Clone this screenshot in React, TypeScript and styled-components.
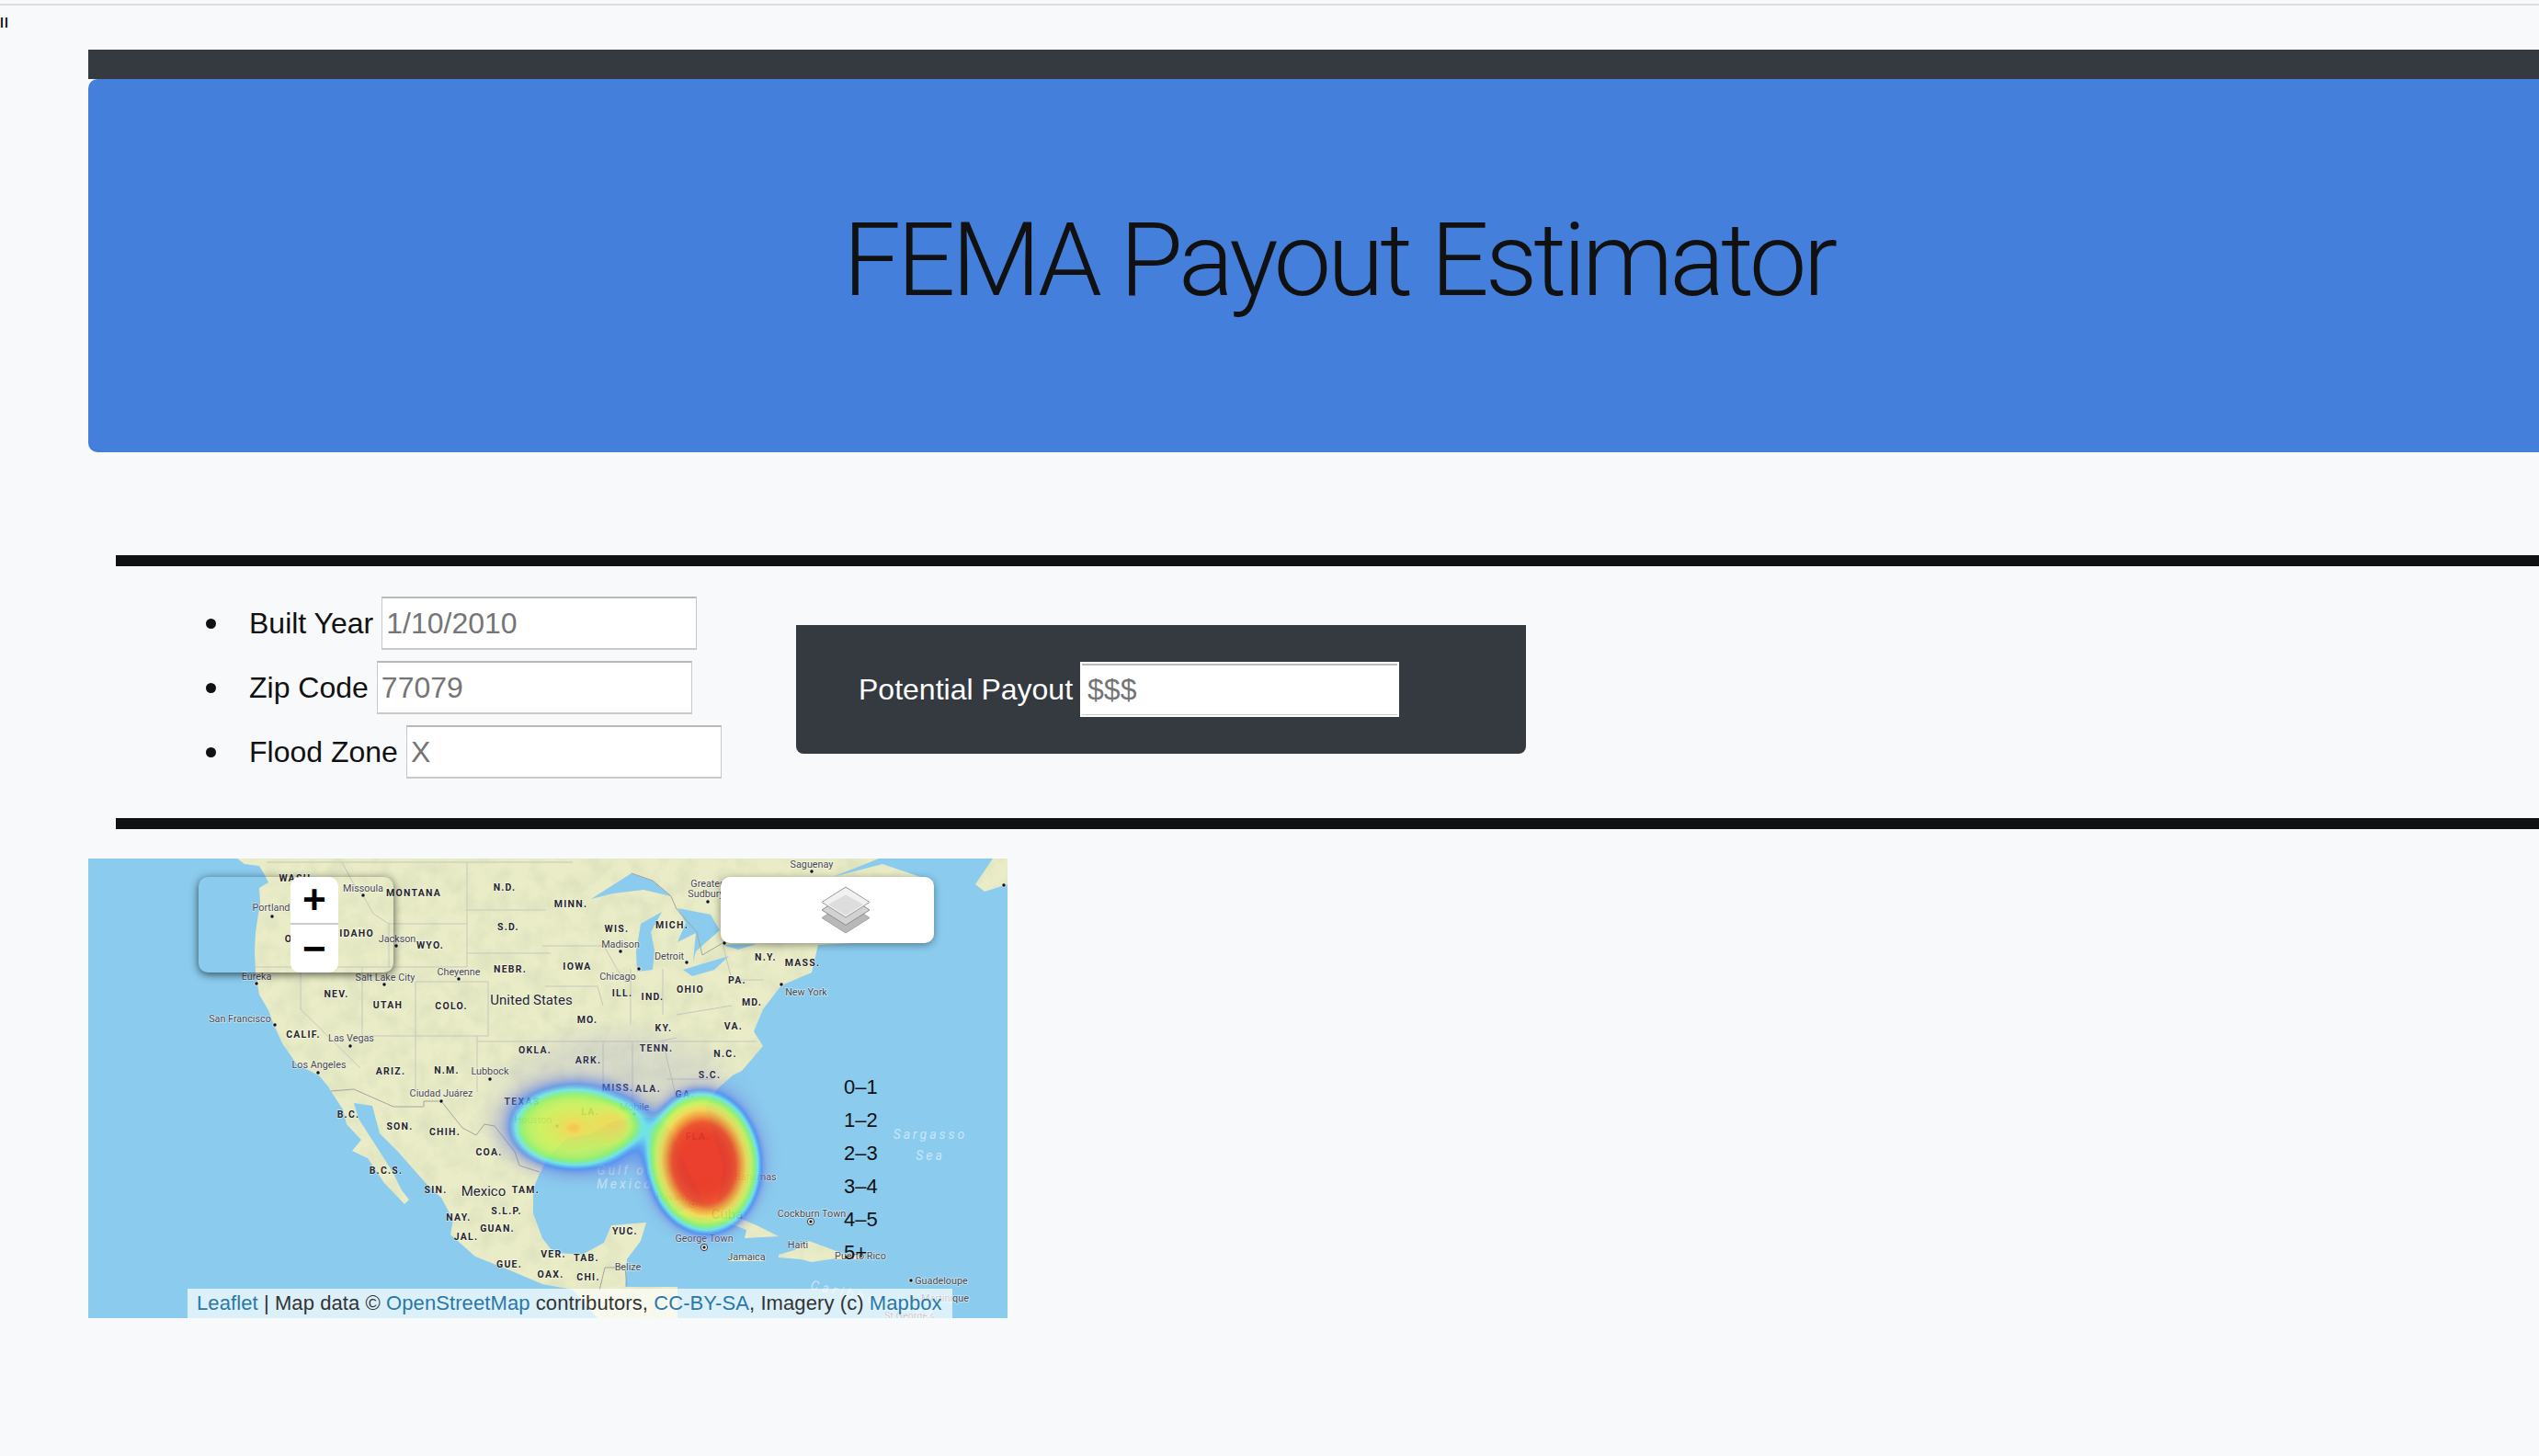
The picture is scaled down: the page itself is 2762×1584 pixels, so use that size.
import React from 'react';
import styled, { createGlobalStyle } from 'styled-components';

const WATER = '#8acbee';
const LAND = '#e9ecc6';

const GlobalStyle = createGlobalStyle`
  html, body {
    margin: 0;
    padding: 0;
    overflow: hidden;
    background: #f8f9fa;
  }
  body {
    font-family: 'Liberation Sans', Arial, sans-serif;
    color: #111;
  }
`;

type Kind = 'state' | 'city' | 'country' | 'sea';
type MapLabel = [string, number, number, Kind];

const LABELS: MapLabel[] = [
  ['WASH.', 227, 21, 'state'], ['Missoula', 299, 32, 'city'], ['MONTANA', 354, 37, 'state'], ['N.D.', 453, 31, 'state'],
  ['Portland', 199, 53, 'city'], ['S.D.', 457, 74, 'state'], ['OREG.', 232, 87, 'state'], ['IDAHO', 292, 81, 'state'],
  ['Jackson', 336, 87, 'city'], ['WYO.', 372, 94, 'state'], ['NEBR.', 459, 120, 'state'], ['Cheyenne', 403, 123, 'city'],
  ['Eureka', 183, 128, 'city'], ['Salt Lake City', 323, 129, 'city'], ['NEV.', 270, 147, 'state'], ['UTAH', 326, 159, 'state'],
  ['COLO.', 395, 160, 'state'], ['United States', 482, 154, 'country'], ['San Francisco', 165, 174, 'city'],
  ['CALIF.', 234, 191, 'state'], ['Las Vegas', 286, 195, 'city'], ['OKLA.', 486, 208, 'state'], ['Los Angeles', 251, 224, 'city'],
  ['ARIZ.', 329, 231, 'state'], ['N.M.', 390, 230, 'state'], ['Lubbock', 437, 231, 'city'], ['Ciudad Juárez', 384, 255, 'city'],
  ['TEXAS', 472, 264, 'state'], ['Houston', 484, 284, 'city'], ['B.C.', 283, 278, 'state'], ['SON.', 339, 291, 'state'],
  ['CHIH.', 388, 297, 'state'], ['COA.', 436, 319, 'state'], ['B.C.S.', 324, 339, 'state'], ['SIN.', 378, 360, 'state'],
  ['Mexico', 430, 362, 'country'], ['TAM.', 476, 360, 'state'], ['S.L.P.', 455, 383, 'state'], ['NAY.', 403, 390, 'state'],
  ['GUAN.', 445, 402, 'state'], ['JAL.', 411, 411, 'state'], ['GUE.', 458, 441, 'state'], ['OAX.', 503, 452, 'state'],
  ['VER.', 506, 430, 'state'], ['TAB.', 542, 434, 'state'], ['CHI.', 544, 455, 'state'], ['YUC.', 584, 405, 'state'],
  ['Belize', 587, 444, 'city'], ['Saguenay', 787, 6, 'city'], ['Greater', 673, 27, 'city'], ['Sudbury', 672, 38, 'city'],
  ['MINN.', 525, 49, 'state'], ['MICH.', 635, 72, 'state'], ['WIS.', 575, 76, 'state'], ['Madison', 579, 93, 'city'],
  ['Detroit', 632, 106, 'city'], ['N.Y.', 737, 107, 'state'], ['MASS.', 777, 113, 'state'], ['IOWA', 532, 117, 'state'],
  ['Chicago', 576, 128, 'city'], ['PA.', 706, 132, 'state'], ['OHIO', 655, 142, 'state'], ['ILL.', 581, 146, 'state'],
  ['New York', 781, 145, 'city'], ['IND.', 614, 150, 'state'], ['MD.', 722, 156, 'state'], ['MO.', 543, 175, 'state'],
  ['VA.', 702, 182, 'state'], ['KY.', 626, 184, 'state'], ['TENN.', 618, 206, 'state'], ['N.C.', 693, 212, 'state'],
  ['ARK.', 544, 219, 'state'], ['S.C.', 676, 235, 'state'], ['MISS.', 576, 249, 'state'], ['ALA.', 609, 250, 'state'],
  ['GA.', 649, 256, 'state'], ['Mobile', 594, 270, 'city'], ['LA.', 546, 275, 'state'], ['FLA.', 663, 302, 'state'],
  ['Gulf of', 584, 339, 'sea'], ['Mexico', 584, 354, 'sea'], ['Sargasso', 916, 300, 'sea'], ['Sea', 916, 323, 'sea'],
  ['Bahamas', 726, 346, 'city'], ['Havana', 636, 368, 'city'], ['Cuba', 695, 387, 'country'], ['Cockburn Town', 787, 386, 'city'],
  ['George Town', 670, 413, 'city'], ['Haiti', 772, 420, 'city'], ['Jamaica', 716, 433, 'city'], ['Puerto Rico', 840, 432, 'city'],
  ['Guadeloupe', 928, 459, 'city'], ['Martinique', 932, 478, 'city'], ["St George's", 893, 497, 'city'],
];

const DOTS: [number, number][] = [
  [299, 40], [200, 63], [335, 95], [403, 131], [183, 136], [322, 137], [203, 181], [285, 204], [250, 233], [437, 240],
  [384, 264], [787, 14], [674, 47], [579, 101], [651, 113], [599, 120], [754, 137], [692, 92], [996, 29], [594, 278],
  [510, 291], [895, 459], [896, 478],
];

const CAPITALS: [number, number][] = [[658, 376], [786, 395], [670, 423]];

const LAND_PATH =
  'M162,0 L170,6 L186,8 L192,18 L196,26 L186,32 L187,48 L182,80 L181,101 L182,124 L186,148 L196,165 L202,181 L211,201 ' +
  'L227,224 L251,236 L261,248 L264,253 L277,273 L281,289 L297,306 L287,318 L304,326 L322,353 L344,376 L349,371 L341,361 ' +
  'L331,341 L314,314 L294,283 L289,266 L309,269 L317,299 L337,319 L352,336 L367,353 L384,369 L397,393 L394,409 L421,433 ' +
  'L461,449 L494,463 L527,469 L554,500 L641,500 L641,466 L584,466 L586,436 L601,416 L607,396 L569,399 L561,418 L537,431 ' +
  'L511,429 L504,426 L494,413 L484,386 L484,359 L491,343 L500,325 L520,305 L545,300 L571,286 L594,281 L621,283 L634,296 ' +
  'L651,336 L671,376 L684,376 L691,336 L681,303 L671,269 L685,250 L701,236 L711,231 L734,204 L724,188 L734,164 L754,138 ' +
  'L787,124 L794,94 L851,91 L905,40 L920,25 L864,6 L810,20 L860,0 Z ' +
  'M984,0 L1000,0 L1000,28 L975,36 L965,28 Z ' +
  'M637,386 L660,378 L690,384 L705,390 L727,399 L751,411 L714,413 L716,404 L695,396 L660,390 Z ' +
  'M751,431 L768,426 L784,416 L811,426 L827,433 L787,439 L775,436 L751,434 Z ' +
  'M814,432 L844,432 L844,436 L814,436 Z M697,435 L734,435 L734,438 L697,438 Z';

const LAKES_PATH =
  'M547,44 L591,16 L614,24 L634,41 L604,34 L571,38 Z ' +
  'M601,71 L624,58 L612,80 L616,100 L614,121 L597,123 L596,101 Z ' +
  'M641,54 L677,61 L687,78 L661,101 L658,112 L661,81 L641,91 L650,70 Z ' +
  'M647,121 L697,106 L681,121 L657,128 Z M689,94 L727,93 L707,99 Z';

const BORDER_PATH =
  'M194,4 H527 M276,4 L290,30 L300,42 L310,60 L327,71 V118 M327,71 H412 M412,4 V118 M182,118 H327 M231,118 V164 L296,228 ' +
  'M298,118 V193 M298,193 H435 M356,134 V254 M327,118 H412 M356,134 H435 M435,134 V193 M412,56 H498 M412,103 H503 ' +
  'M423,193 V254 M423,199 H519 M494,95 H561 M497,139 H554 M519,199 H727 M554,139 L560,160 M561,95 L575,120 L585,135 ' +
  'M590,120 V180 M625,120 V170 M640,170 L700,160 M640,195 L620,199 M560,200 V262 M592,200 V270 M625,199 L640,262 ' +
  'M690,92 L700,132 H735 M630,240 H680';

const COUNTRY_PATH =
  'M264,253 L289,251 L332,270 L365,270 V264 H384 L407,293 L422,301 L431,289 L442,291 L464,319 L469,334 L491,341 ' +
  'M556,470 L562,445 L584,445 L586,465 M591,16 L614,24 L634,41 L640,55 L662,80 L668,105 L690,92';

const HeatBlobs = () => (
  <g filter="url(#heatmap)">
    <ellipse cx={575} cy={268} rx={155} ry={95} fill="url(#halo)" />
    <ellipse cx={530} cy={292} rx={100} ry={64} fill="url(#fringe)" />
    <ellipse cx={670} cy={328} rx={80} ry={94} fill="url(#fringe)" />
    <ellipse cx={528} cy={293} rx={72} ry={46} fill="url(#warm)" />
    <ellipse cx={580} cy={289} rx={40} ry={30} fill="url(#tail)" />
    <ellipse cx={670} cy={332} rx={66} ry={84} fill="url(#hot)" transform="rotate(-6 670 332)" />
  </g>
);

const MapDrawing = () => (
  <MapSvg viewBox="0 0 1000 500" xmlns="http://www.w3.org/2000/svg">
    <defs>
      <radialGradient id="halo">
        <stop offset="0" stopColor="#fff" stopOpacity={0.07} />
        <stop offset="0.7" stopColor="#fff" stopOpacity={0.05} />
        <stop offset="1" stopColor="#fff" stopOpacity={0} />
      </radialGradient>
      <radialGradient id="fringe">
        <stop offset="0.6" stopColor="#fff" stopOpacity={0.2} />
        <stop offset="1" stopColor="#fff" stopOpacity={0} />
      </radialGradient>
      <radialGradient id="warm">
        <stop offset="0" stopColor="#fff" stopOpacity={0.6} />
        <stop offset="0.2" stopColor="#fff" stopOpacity={0.42} />
        <stop offset="0.72" stopColor="#fff" stopOpacity={0.29} />
        <stop offset="1" stopColor="#fff" stopOpacity={0} />
      </radialGradient>
      <radialGradient id="tail">
        <stop offset="0" stopColor="#fff" stopOpacity={0.3} />
        <stop offset="1" stopColor="#fff" stopOpacity={0} />
      </radialGradient>
      <radialGradient id="hot">
        <stop offset="0" stopColor="#fff" stopOpacity={1} />
        <stop offset="0.48" stopColor="#fff" stopOpacity={0.82} />
        <stop offset="0.78" stopColor="#fff" stopOpacity={0.38} />
        <stop offset="1" stopColor="#fff" stopOpacity={0} />
      </radialGradient>
      <filter id="heatmap" x="-20%" y="-20%" width="140%" height="140%" colorInterpolationFilters="sRGB">
        <feGaussianBlur stdDeviation="4" />
        <feColorMatrix type="matrix" values="0 0 0 1 0  0 0 0 1 0  0 0 0 1 0  0 0 0 1 0" />
        <feComponentTransfer>
          <feFuncR type="table" tableValues="0.5 0.44 0.27 0.42 0.56 0.8 0.95 0.95 0.93 0.92 0.92" />
          <feFuncG type="table" tableValues="0.5 0.47 0.5 0.9 0.95 0.95 0.85 0.6 0.3 0.2 0.2" />
          <feFuncB type="table" tableValues="0.8 0.85 0.95 0.92 0.42 0.35 0.3 0.2 0.15 0.13 0.13" />
          <feFuncA type="table" tableValues="0 0.28 0.72 0.9 0.92 0.9 0.88 0.9 0.93 0.93 0.93" />
        </feComponentTransfer>
      </filter>
      <filter id="terrain" x="0" y="0" width="100%" height="100%" colorInterpolationFilters="sRGB">
        <feTurbulence type="fractalNoise" baseFrequency="0.05" numOctaves={4} seed={7} result="noise" />
        <feColorMatrix
          in="noise"
          type="matrix"
          values="0 0 0 0 0.78  0 0 0 0 0.81  0 0 0 0 0.7  0 0 0 0.7 -0.28"
          result="shade"
        />
        <feComposite in="shade" in2="SourceAlpha" operator="in" result="clipped" />
        <feMerge>
          <feMergeNode in="SourceGraphic" />
          <feMergeNode in="clipped" />
        </feMerge>
      </filter>
    </defs>
    <path d={LAND_PATH} fill={LAND} filter="url(#terrain)" />
    <path d={LAKES_PATH} fill={WATER} />
    <path d={BORDER_PATH} fill="none" stroke="#c6c6bc" strokeWidth={1} />
    <path d={COUNTRY_PATH} fill="none" stroke="#a4a4a0" strokeWidth={1} />
    {DOTS.map(([x, y]) => (
      <circle key={`${x}-${y}`} cx={x} cy={y} r={2.2} fill="#111" stroke="#fff" strokeWidth={0.8} />
    ))}
    {CAPITALS.map(([x, y]) => (
      <g key={`${x}-${y}`}>
        <circle cx={x} cy={y} r={3.6} fill="#fff" stroke="#333" strokeWidth={1} />
        <circle cx={x} cy={y} r={1.7} fill="#222" />
      </g>
    ))}
    {LABELS.map(([text, x, y, kind]) => (
      <MapText key={`${text}-${x}`} x={x} y={y} $kind={kind}>
        {text}
      </MapText>
    ))}
    <CaribbeanText x={0} y={0} transform="translate(785 468) rotate(13)">
      Caribbean Sea
    </CaribbeanText>
    <HeatBlobs />
  </MapSvg>
);

const LayersIcon = () => (
  <svg width="54" height="52" viewBox="0 0 54 52">
    <path d="M27 18 L53 34.5 L27 51 L1 34.5 Z" fill="#b8b8b8" stroke="#a2a2a2" />
    <path d="M27 9.5 L53 26 L27 42.5 L1 26 Z" fill="#d2d2d2" stroke="#8e8e8e" />
    <path d="M27 1 L53 17.5 L27 34 L1 17.5 Z" fill="#f1f1f1" stroke="#9a9a9a" />
    <path d="M27 9.5 L46 20 L27 32 L8 20 Z" fill="#dddddd" />
  </svg>
);

const LEGEND = ['0–1', '1–2', '2–3', '3–4', '4–5', '5+'];

const FIELDS = [
  { label: 'Built Year', placeholder: '1/10/2010' },
  { label: 'Zip Code', placeholder: '77079' },
  { label: 'Flood Zone', placeholder: 'X' },
];

const App = () => (
  <>
    <GlobalStyle />
    <Page>
      <TopLine />
      <Stray>ll</Stray>
      <Main>
        <DarkBar />
        <Jumbotron>
          <Title>FEMA Payout Estimator</Title>
        </Jumbotron>
        <HeavyRule />
        <FormRow>
          <FieldList>
            {FIELDS.map((field) => (
              <FieldItem key={field.label}>
                <span>{field.label}</span>
                <TextInput placeholder={field.placeholder} readOnly />
              </FieldItem>
            ))}
          </FieldList>
          <PayoutPanel>
            <span>Potential Payout</span>
            <PayoutInput placeholder="$$$" readOnly />
          </PayoutPanel>
        </FormRow>
        <HeavyRule $flush />
        <MapFrame>
          <MapDrawing />
          <ZoomBar>
            <ZoomButton>+</ZoomButton>
            <ZoomButton>−</ZoomButton>
          </ZoomBar>
          <LayersToggle>
            <LayersIcon />
          </LayersToggle>
          <Legend>
            {LEGEND.map((range) => (
              <LegendRow key={range}>{range}</LegendRow>
            ))}
          </Legend>
          <Attribution>
            <a>Leaflet</a> | Map data © <a>OpenStreetMap</a> contributors, <a>CC-BY-SA</a>, Imagery (c) <a>Mapbox</a>
          </Attribution>
        </MapFrame>
      </Main>
    </Page>
  </>
);

export default App;

const Page = styled.div`
  width: 2762px;
  height: 1584px;
  overflow: hidden;
  padding-top: 4px;
  box-sizing: border-box;
`;

const TopLine = styled.div`
  height: 2px;
  background: #dcdde3;
`;

const Stray = styled.div`
  height: 48px;
  padding-top: 12px;
  box-sizing: border-box;
  font-size: 14px;
  line-height: 14px;
  font-weight: 700;
  letter-spacing: 1px;
`;

const Main = styled.main`
  margin-left: 96px;
  width: 2720px;
`;

const DarkBar = styled.div`
  height: 32px;
  background: #343a40;
`;

const Jumbotron = styled.section`
  height: 406px;
  display: flex;
  align-items: center;
  justify-content: center;
  background: #4480db;
  border-radius: 10px;
`;

const Title = styled.h1`
  margin: 0 0 12px;
  font-family: Roboto, 'Liberation Sans', sans-serif;
  font-size: 112px;
  font-weight: 300;
  line-height: 1.2;
  letter-spacing: -4.2px;
  color: #111;
`;

const HeavyRule = styled.div<{ $flush?: boolean }>`
  height: 12px;
  margin-top: ${({ $flush }) => ($flush ? 0 : 112)}px;
  margin-left: 30px;
  background: #101112;
`;

const FormRow = styled.div`
  height: 274px;
  display: flex;
  align-items: flex-start;
  padding-left: 29px;
  font-size: 32px;
`;

const FieldList = styled.ul`
  width: 741px;
  box-sizing: border-box;
  margin: 33px 0 0;
  padding: 0 0 0 99px;
  display: flex;
  flex-direction: column;
  gap: 12px;
  list-style: none;
`;

const FieldItem = styled.li`
  height: 58px;
  display: flex;
  align-items: center;
  gap: 9px;

  &::before {
    content: '';
    width: 11px;
    height: 11px;
    margin-right: 27px;
    border-radius: 50%;
    background: #111;
  }
`;

const TextInput = styled.input`
  width: 343px;
  height: 58px;
  box-sizing: border-box;
  padding: 0 4px;
  border: solid #c9c9c9;
  border-width: 2px 1px;
  border-top-color: #b8b8b8;
  background: #fff;
  font: inherit;
  outline: none;

  &::placeholder {
    color: #757575;
  }
`;

const PayoutPanel = styled.div`
  width: 794px;
  height: 140px;
  margin-top: 64px;
  box-sizing: border-box;
  padding: 0 0 0 68px;
  display: flex;
  align-items: center;
  gap: 8px;
  background: #343a40;
  border-radius: 0 0 8px 8px;
  color: #fff;
`;

const PayoutInput = styled(TextInput)`
  width: 347px;
  height: 60px;
  padding: 0 6px;
  border: 2px solid #fff;
  box-shadow: inset 0 2px 0 #bbb, inset 0 -1px 0 #ccc;
`;

const MapFrame = styled.div`
  position: relative;
  width: 1000px;
  height: 500px;
  margin-top: 32px;
  overflow: hidden;
  background: ${WATER};
`;

const MapSvg = styled.svg`
  display: block;
  width: 1000px;
  height: 500px;
`;

const MapText = styled.text<{ $kind: Kind }>`
  text-anchor: middle;
  dominant-baseline: central;
  font-family: Roboto, 'Liberation Sans', sans-serif;
  paint-order: stroke;
  stroke-linejoin: round;
  font-size: ${({ $kind }) => ({ state: 10.5, city: 10.8, country: 15, sea: 14 }[$kind])}px;
  font-weight: ${({ $kind }) => ($kind === 'state' ? 700 : 400)};
  font-style: ${({ $kind }) => ($kind === 'sea' ? 'italic' : 'normal')};
  letter-spacing: ${({ $kind }) => ({ state: 1.25, city: 0, country: 0, sea: 3 }[$kind])}px;
  fill: ${({ $kind }) => ({ state: '#26262c', city: '#48484f', country: '#24242a', sea: 'rgba(255,255,255,0.55)' }[$kind])};
  stroke: ${({ $kind }) => ($kind === 'sea' ? 'none' : 'rgba(255,255,255,0.6)')};
  stroke-width: 1.4px;
`;

const CaribbeanText = styled.text`
  font-family: Roboto, 'Liberation Sans', sans-serif;
  font-size: 14px;
  font-style: italic;
  letter-spacing: 4px;
  fill: rgba(255, 255, 255, 0.55);
`;

const ZoomBar = styled.div`
  position: absolute;
  left: 120px;
  top: 20px;
  width: 212px;
  height: 104px;
  box-sizing: border-box;
  padding-left: 100px;
  border-radius: 10px;
  box-shadow: 0 2px 10px rgba(0, 0, 0, 0.65);
`;

const ZoomButton = styled.div`
  width: 52px;
  height: 52px;
  padding-top: 5px;
  display: flex;
  align-items: center;
  justify-content: center;
  box-sizing: border-box;
  background: #fff;
  font-family: 'Liberation Mono', monospace;
  font-size: 44px;
  font-weight: 700;
  color: #000;

  &:first-child {
    border-bottom: 2px solid #ccc;
    border-radius: 10px 10px 0 0;
  }

  &:last-child {
    border-radius: 0 0 10px 10px;
  }
`;

const LayersToggle = styled.div`
  position: absolute;
  left: 688px;
  top: 20px;
  width: 232px;
  height: 72px;
  box-sizing: border-box;
  padding-left: 40px;
  display: flex;
  align-items: center;
  justify-content: center;
  background: #fff;
  border-radius: 10px;
  box-shadow: 0 2px 8px rgba(0, 0, 0, 0.4);
`;

const Legend = styled.div`
  position: absolute;
  left: 822px;
  top: 231px;
  display: flex;
  flex-direction: column;
  font-size: 22px;
  color: #111;
`;

const LegendRow = styled.div`
  height: 36px;
  line-height: 36px;
`;

const Attribution = styled.div`
  position: absolute;
  right: 60px;
  bottom: 0;
  width: 832px;
  height: 32px;
  box-sizing: border-box;
  padding: 0 10px;
  line-height: 32px;
  white-space: nowrap;
  font-size: 22px;
  letter-spacing: 0.09px;
  color: #333;
  background: rgba(255, 255, 255, 0.7);

  a {
    color: #2a78a8;
  }
`;
